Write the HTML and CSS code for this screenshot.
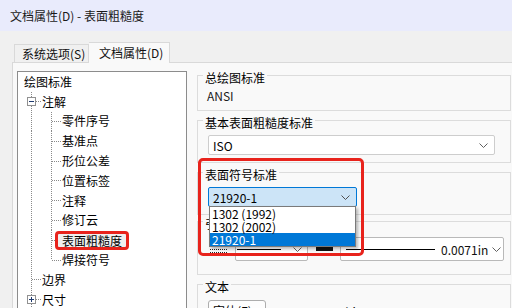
FILE: index.html
```html
<!DOCTYPE html>
<html lang="zh-CN">
<head>
<meta charset="utf-8">
<title>文档属性(D) - 表面粗糙度</title>
<link rel="stylesheet" href="styles.css">
</head>
<body>
<div class="titlebar">文档属性(D) - 表面粗糙度</div>
<div class="tabstrip">
  <div class="tab">系统选项(S)</div>
  <div class="tab active">文档属性(D)</div>
</div>
<div class="page">
  <div class="tree">
    <div class="node"><span class="label root">绘图标准</span></div>
    <div class="node"><span class="g g-t exp"><svg width="9" height="9" viewBox="0 0 9 9"><rect x="0.5" y="0.5" width="8" height="8" fill="#fff" stroke="#919191"/><path d="M2 4.5h5" stroke="#1f3b70"/></svg></span><span class="label">注解</span></div>
    <div class="node"><span class="g g-v"></span><span class="g g-t"></span><span class="label">零件序号</span></div>
    <div class="node"><span class="g g-v"></span><span class="g g-t"></span><span class="label">基准点</span></div>
    <div class="node"><span class="g g-v"></span><span class="g g-t"></span><span class="label">形位公差</span></div>
    <div class="node"><span class="g g-v"></span><span class="g g-t"></span><span class="label">位置标签</span></div>
    <div class="node"><span class="g g-v"></span><span class="g g-t"></span><span class="label">注释</span></div>
    <div class="node"><span class="g g-v"></span><span class="g g-t"></span><span class="label">修订云</span></div>
    <div class="node"><span class="g g-v"></span><span class="g g-t"></span><span class="label marked">表面粗糙度</span></div>
    <div class="node"><span class="g g-v"></span><span class="g g-l"></span><span class="label">焊接符号</span></div>
    <div class="node"><span class="g g-t"></span><span class="label">边界</span></div>
    <div class="node"><span class="g g-t exp"><svg width="9" height="9" viewBox="0 0 9 9"><rect x="0.5" y="0.5" width="8" height="8" fill="#fff" stroke="#919191"/><path d="M2 4.5h5M4.5 2v5" stroke="#1f3b70"/></svg></span><span class="label">尺寸</span></div>
  </div>
  <div class="settings">
    <section class="group g1">
      <div class="group-title">总绘图标准</div>
      <div class="value">ANSI</div>
    </section>
    <section class="group g2">
      <div class="group-title">基本表面粗糙度标准</div>
      <div class="combo"><span>ISO</span><svg class="chev" width="9" height="5" viewBox="0 0 9 5"><path d="M0.5 0.5L4.5 4.5L8.5 0.5" fill="none" stroke="#606060"/></svg></div>
    </section>
    <section class="group g3">
      <div class="group-title">表面符号标准</div>
      <div class="combo focus"><span>21920-1</span><svg class="chev" width="9" height="5" viewBox="0 0 9 5"><path d="M0.5 0.5L4.5 4.5L8.5 0.5" fill="none" stroke="#505050"/></svg>
        <div class="listbox">
          <div class="opt">1302 (1992)</div>
          <div class="opt">1302 (2002)</div>
          <div class="opt sel">21920-1</div>
        </div>
      </div>
    </section>
    <section class="group g4">
      <div class="group-title">引线样式</div>
      <div class="line-row">
        <svg class="ls-icon" width="18" height="8" viewBox="0 0 18 8"><path d="M0 1.5h18M0 4.5h18M0 7.5h18" stroke="#222" stroke-dasharray="1 1"/></svg>
        <div class="combo small"><span class="stroke short"></span><svg class="chev" width="9" height="5" viewBox="0 0 9 5"><path d="M0.5 0.5L4.5 4.5L8.5 0.5" fill="none" stroke="#606060"/></svg></div>
        <svg class="wt-icon" width="17" height="10" viewBox="0 0 17 10"><path d="M0 0.5h17" stroke="#222"/><rect x="0" y="3" width="17" height="4" fill="#111"/></svg>
        <div class="combo wide"><span class="stroke long"></span><span class="num">0.0071in</span><svg class="chev" width="9" height="5" viewBox="0 0 9 5"><path d="M0.5 0.5L4.5 4.5L8.5 0.5" fill="none" stroke="#606060"/></svg></div>
      </div>
    </section>
    <section class="group g5">
      <div class="group-title">文本</div>
      <div class="font-row">
        <div class="btn">字体(F)...</div>
        <span class="font-name">Century Gothic</span>
      </div>
    </section>
  </div>
</div>
<div class="callout"></div>
</body>
</html>
```
FILE: styles.css
```css
html, body {
  margin: 0;
  padding: 0;
}
body {
  width: 512px;
  height: 308px;
  overflow: hidden;
  position: relative;
  background: #f0f0f0;
  color: #000;
  font-family: "Noto Sans CJK SC", "Noto Sans", sans-serif;
  font-size: 12px;
}
.titlebar {
  height: 31px;
  box-sizing: border-box;
  padding-left: 10px;
  display: flex;
  align-items: center;
  background: #e9ebfc;
  color: #1a1a1a;
}
.tabstrip {
  height: 31px;
  display: flex;
  align-items: flex-end;
  padding-left: 14px;
  background: #f0f0f0;
}
.tab {
  box-sizing: border-box;
  height: 18px;
  width: 75px;
  padding-left: 7px;
  border: 1px solid #d9d9d9;
  border-bottom: none;
  background: #f0f0f0;
  line-height: 18px;
  color: #111;
}
.tab.active {
  position: relative;
  height: 21px;
  width: 81px;
  margin-bottom: -1px;
  padding-left: 10px;
  background: #f9f9f9;
  line-height: 19px;
  border-left: none;
}
.page {
  margin-left: 12px;
  border-left: 1px solid #d9d9d9;
  border-top: 1px solid #d9d9d9;
  background: #f9f9f9;
  padding: 8px 0 0 4px;
  height: 260px;
  display: flex;
  align-items: flex-start;
}
.tree {
  flex: none;
  box-sizing: border-box;
  width: 170px;
  height: 260px;
  border: 1px solid #8c8c8c;
  background: #fff;
  overflow: hidden;
}
.node {
  display: flex;
  align-items: center;
  height: 19.8px;
  padding-left: 3px;
}
.g {
  flex: none;
  width: 20px;
  align-self: stretch;
  box-sizing: border-box;
  display: flex;
  align-items: center;
  justify-content: flex-end;
  background: linear-gradient(#8a8a8a 50%, transparent 50%) 10px 0 / 1px 2px repeat-y;
}
.g-t::after,
.g-l::after {
  content: "";
  width: 9px;
  border-top: 1px dotted #8a8a8a;
}
.g-l {
  background:
    linear-gradient(#fff, #fff) 10px 100% / 1px 50% no-repeat,
    linear-gradient(#8a8a8a 50%, transparent 50%) 10px 0 / 1px 2px repeat-y;
}
.exp {
  justify-content: flex-start;
  padding-left: 6px;
}
.exp svg {
  flex: none;
  display: block;
}
.exp::after {
  flex: 1;
  width: auto;
}
.label {
  margin-left: 1px;
  line-height: 16px;
  white-space: nowrap;
}
.label.root {
  margin-left: 3px;
}
.label.marked {
  margin-left: -6px;
  padding: 0 4px;
  line-height: 13px;
  border: 3px solid #e8231c;
  border-radius: 4px;
  background: #efefef;
}
.settings {
  flex: none;
  width: 314px;
  margin-left: 10px;
  display: flex;
  flex-direction: column;
}
.group {
  border: 1px solid #dcdcdc;
  padding: 0 15px 7px 10px;
}
.g1 { margin-top: 4px; padding-bottom: 6px; }
.g2 { margin-top: 9px; }
.g3 { margin-top: 9px; }
.g4 { margin-top: 6px; padding-bottom: 13px; }
.g5 { margin-top: 9px; }
.group-title {
  width: max-content;
  margin: -6px 0 0 -5px;
  padding: 0 2px;
  line-height: 16px;
  background: #f9f9f9;
}
.value {
  margin: 2px 0 0 -1px;
  line-height: 16px;
  color: #1a1a1a;
}
.combo {
  position: relative;
  box-sizing: border-box;
  margin-top: 4px;
  height: 20px;
  border: 1px solid #cdcdcd;
  border-radius: 2px;
  background: #fff;
  display: flex;
  align-items: center;
  justify-content: space-between;
  padding: 0 6px 0 4px;
}
.chev {
  flex: none;
  display: block;
}
.combo.focus {
  width: 149px;
  background: #cce4f7;
  border-color: #0078d7;
}
.listbox {
  position: absolute;
  top: 100%;
  left: 0;
  right: 0;
  box-sizing: border-box;
  border: 1px solid #7a7a7a;
  background: #fff;
  box-shadow: 2px 2px 3px rgba(0, 0, 0, 0.28);
  z-index: 2;
}
.opt {
  line-height: 13px;
  padding-left: 2px;
}
.opt.sel {
  background: #0078d7;
  color: #fff;
}
.line-row {
  display: flex;
  align-items: center;
  margin-top: 5px;
  height: 24px;
}
.line-row > * {
  flex: none;
}
.ls-icon {
  margin-left: 2px;
  display: block;
}
.wt-icon {
  margin-left: 8px;
  display: block;
}
.combo.small,
.combo.wide {
  margin-top: 0;
  height: 24px;
  border-color: #b9b9b9;
  padding-left: 1px;
}
.combo.small {
  width: 73px;
  margin-left: 7px;
  padding-right: 5px;
}
.combo.wide {
  width: 164px;
  margin-left: 7px;
  padding-left: 5px;
  padding-right: 2px;
  justify-content: flex-start;
}
.stroke {
  height: 1px;
  background: #000;
}
.stroke.short {
  width: 44px;
}
.stroke.long {
  width: 89px;
}
.num {
  margin-left: 6px;
  margin-right: auto;
  color: #111;
}
.font-row {
  display: flex;
  align-items: center;
  margin-top: 5px;
}
.btn {
  box-sizing: border-box;
  width: 58px;
  height: 22px;
  padding-left: 4px;
  border: 1px solid #adadad;
  border-radius: 3px;
  background: #fdfdfd;
  line-height: 20px;
}
.font-name {
  margin-left: 12px;
}
.callout {
  position: absolute;
  left: 198px;
  top: 158px;
  width: 166px;
  height: 98px;
  box-sizing: border-box;
  border: 3px solid #e8231c;
  border-radius: 5px;
  z-index: 3;
}
```
